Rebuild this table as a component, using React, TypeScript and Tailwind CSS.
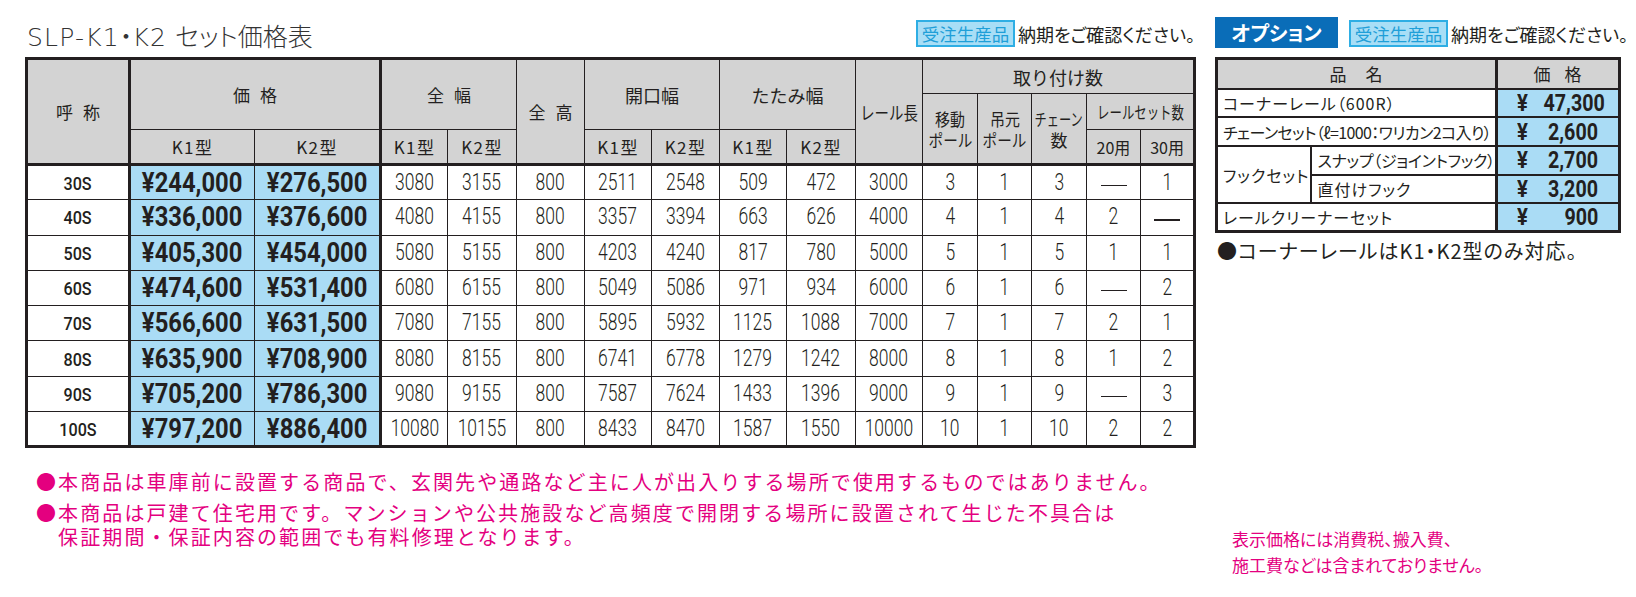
import type { ReactNode } from 'react'

type Row = string[]

const rows: Row[] = [
  ['30S', '¥244,000', '¥276,500', '3080', '3155', '800', '2511', '2548', '509', '472', '3000', '3', '1', '3', '—', '1'],
  ['40S', '¥336,000', '¥376,600', '4080', '4155', '800', '3357', '3394', '663', '626', '4000', '4', '1', '4', '2', '—'],
  ['50S', '¥405,300', '¥454,000', '5080', '5155', '800', '4203', '4240', '817', '780', '5000', '5', '1', '5', '1', '1'],
  ['60S', '¥474,600', '¥531,400', '6080', '6155', '800', '5049', '5086', '971', '934', '6000', '6', '1', '6', '—', '2'],
  ['70S', '¥566,600', '¥631,500', '7080', '7155', '800', '5895', '5932', '1125', '1088', '7000', '7', '1', '7', '2', '1'],
  ['80S', '¥635,900', '¥708,900', '8080', '8155', '800', '6741', '6778', '1279', '1242', '8000', '8', '1', '8', '1', '2'],
  ['90S', '¥705,200', '¥786,300', '9080', '9155', '800', '7587', '7624', '1433', '1396', '9000', '9', '1', '9', '—', '3'],
  ['100S', '¥797,200', '¥886,400', '10080', '10155', '800', '8433', '8470', '1587', '1550', '10000', '10', '1', '10', '2', '2'],
]

const colW = [
  'w-[103px]', 'w-[125px]', 'w-[126px]', 'w-[67px]', 'w-[69px]', 'w-[68px]', 'w-[67px]', 'w-[68px]',
  'w-[67px]', 'w-[69px]', 'w-[67px]', 'w-[55px]', 'w-[54px]', 'w-[55px]', 'w-[54px]', 'w-[54px]',
]

const th = 'border border-[#231f20] bg-[#d3d3d3] p-0 text-center align-middle font-normal text-[#231f20]'
const td = 'border border-[#231f20] p-0 text-center align-middle text-[#231f20]'
const num = "font-['Roboto',sans-serif]"

// 2文字の見出し（字間あき）
function Spaced({ a, b, gap = 'gap-[10px]' }: { a: string; b: string; gap?: string }) {
  return (
    <span className={`inline-flex ${gap}`}>
      <span>{a}</span>
      <span>{b}</span>
    </span>
  )
}

function Badge() {
  return (
    <span className="inline-flex h-[27px] w-[99px] shrink-0 items-center justify-center border-2 border-[#2eaee4] bg-[#a8def6] text-[17.5px] leading-none text-[#1f9fd8]">
      受注生産品
    </span>
  )
}

function Cell({ v, i, first }: { v: string; i: number; first: boolean }) {
  const top = first ? 'border-t-[3px]' : ''
  if (i === 0) {
    return (
      <td className={`${td} ${top} border-r-[3px]`}>
        <span className={`${num} inline-block text-[19px] font-medium leading-none scale-x-[0.85]`}>{v}</span>
      </td>
    )
  }
  if (i === 1 || i === 2) {
    return (
      <td className={`${td} ${top} bg-[#aadcf5] ${i === 2 ? 'border-r-[3px]' : ''}`}>
        <span className={`${num} inline-block text-[28px] font-bold leading-none scale-x-[0.85]`}>{v}</span>
      </td>
    )
  }
  if (v === '—') {
    return (
      <td className={`${td} ${top}`}>
        <span className="inline-block h-[1.5px] w-[26px] bg-[#231f20] align-middle" aria-label="—" />
      </td>
    )
  }
  return (
    <td className={`${td} ${top}`}>
      <span className={`${num} inline-block text-[23px] font-light leading-none scale-x-[0.76]`}>{v}</span>
    </td>
  )
}

// セル幅より広い見出しを中央で縮める
function Narrow({ children, s = '' }: { children: ReactNode; s?: string }) {
  return (
    <span className="flex justify-center">
      <span className={`inline-block shrink-0 whitespace-nowrap ${s}`}>{children}</span>
    </span>
  )
}

function MainTable() {
  return (
    <table className="w-[1170px] table-fixed border-collapse border-[3px] border-[#231f20]">
      <colgroup>
        {colW.map((c, i) => (
          <col key={i} className={c} />
        ))}
      </colgroup>
      <thead className="text-[17px] leading-none">
        <tr className="h-[35px]">
          <th rowSpan={3} className={`${th} border-r-[3px]`}>
            <Spaced a="呼" b="称" />
          </th>
          <th rowSpan={2} colSpan={2} className={`${th} border-r-[3px]`}>
            <Spaced a="価" b="格" />
          </th>
          <th rowSpan={2} colSpan={2} className={th}>
            <Spaced a="全" b="幅" />
          </th>
          <th rowSpan={3} className={th}>
            <Spaced a="全" b="高" />
          </th>
          <th rowSpan={2} colSpan={2} className={`${th} text-[18px]`}>開口幅</th>
          <th rowSpan={2} colSpan={2} className={`${th} text-[18px]`}>たたみ幅</th>
          <th rowSpan={3} className={th}>
            <Narrow s="scale-x-[0.8] text-[18px]">レール長</Narrow>
          </th>
          <th colSpan={5} className={`${th} text-[18px]`}>取り付け数</th>
        </tr>
        <tr className="h-[36px]">
          <th rowSpan={2} className={`${th} leading-[21px]`}>
            <Narrow s="scale-x-[0.88]">移動</Narrow>
            <Narrow s="scale-x-[0.86]">ポール</Narrow>
          </th>
          <th rowSpan={2} className={`${th} leading-[21px]`}>
            <Narrow s="scale-x-[0.88]">吊元</Narrow>
            <Narrow s="scale-x-[0.86]">ポール</Narrow>
          </th>
          <th rowSpan={2} className={`${th} leading-[21px]`}>
            <Narrow s="scale-x-[0.72]">チェーン</Narrow>
            <Narrow>数</Narrow>
          </th>
          <th colSpan={2} className={th}>
            <Narrow s="scale-x-[0.73]">レールセット数</Narrow>
          </th>
        </tr>
        <tr className="h-[35px]">
          <th className={`${th} tracking-[0.08em]`}>K1型</th>
          <th className={`${th} border-r-[3px] tracking-[0.08em]`}>K2型</th>
          <th className={`${th} tracking-[0.08em]`}>K1型</th>
          <th className={`${th} tracking-[0.08em]`}>K2型</th>
          <th className={`${th} tracking-[0.08em]`}>K1型</th>
          <th className={`${th} tracking-[0.08em]`}>K2型</th>
          <th className={`${th} tracking-[0.08em]`}>K1型</th>
          <th className={`${th} tracking-[0.08em]`}>K2型</th>
          <th className={`${th} text-[16px]`}>20用</th>
          <th className={`${th} text-[16px]`}>30用</th>
        </tr>
      </thead>
      <tbody>
        {rows.map((r, ri) => (
          <tr key={r[0]} className="h-[35.3px]">
            {r.map((v, i) => (
              <Cell key={i} v={v} i={i} first={ri === 0} />
            ))}
          </tr>
        ))}
      </tbody>
    </table>
  )
}

const otd = 'border-2 border-[#231f20] p-0 align-middle whitespace-nowrap text-[16px] leading-none text-[#231f20]'

function Price({ v }: { v: string }) {
  return (
    <td className={`${otd} border-l-[3px] bg-[#aadcf5]`}>
      <div className={`${num} flex items-center justify-between pl-[19px] pr-[20px] text-[24px] font-bold leading-none tracking-normal`}>
        <span className="inline-block origin-left scale-x-[0.85]">¥</span>
        <span className="inline-block origin-right scale-x-[0.82]">{v}</span>
      </div>
    </td>
  )
}

function OptionTable() {
  return (
    <table className="w-[403px] table-fixed border-collapse border-[3px] border-[#231f20] tracking-[1px] [font-feature-settings:'palt']">
      <colgroup>
        <col className="w-[94px]" />
        <col className="w-[186px]" />
        <col className="w-[123px]" />
      </colgroup>
      <thead>
        <tr className="h-[30px]">
          <th colSpan={2} className={`${otd} bg-[#d3d3d3] text-center text-[17px] font-normal`}>
            <Spaced a="品" b="名" gap="gap-[18px]" />
          </th>
          <th className={`${otd} border-l-[3px] bg-[#d3d3d3] text-center text-[17px] font-normal`}>
            <Spaced a="価" b="格" gap="gap-[13px]" />
          </th>
        </tr>
      </thead>
      <tbody>
        <tr className="h-[28.7px]">
          <td colSpan={2} className={`${otd} pl-[5px]`}>コーナーレール（600R）</td>
          <Price v="47,300" />
        </tr>
        <tr className="h-[28.7px]">
          <td colSpan={2} className={`${otd} pl-[5px] tracking-[-0.6px]`}>チェーンセット（ℓ=1000：ワリカン2コ入り）</td>
          <Price v="2,600" />
        </tr>
        <tr className="h-[28.7px]">
          <td rowSpan={2} className={`${otd} pl-[5px]`}>フックセット</td>
          <td className={`${otd} pl-[6px] tracking-[-0.3px]`}>スナップ（ジョイントフック）</td>
          <Price v="2,700" />
        </tr>
        <tr className="h-[28.7px]">
          <td className={`${otd} pl-[6px]`}>直付けフック</td>
          <Price v="3,200" />
        </tr>
        <tr className="h-[28.7px]">
          <td colSpan={2} className={`${otd} pl-[5px]`}>レールクリーナーセット</td>
          <Price v="900" />
        </tr>
      </tbody>
    </table>
  )
}

export default function App() {
  return (
    <div className="h-[597px] w-[1636px] overflow-hidden bg-white font-['Noto_Sans_CJK_JP',sans-serif] text-[#231f20]">
      <div className="flex gap-[20px] pl-[25px] pt-[14px]">
        <div className="w-[1170px]">
          <div className="flex h-[43px] items-end justify-between">
            <h1 className="mb-[7px] ml-[2px] whitespace-nowrap text-[25px] font-light leading-none text-[#333] [font-feature-settings:'palt']">
              <span className="font-['DejaVu_Sans',sans-serif] tracking-[1.2px]">SLP-K1</span>
              <span>・</span>
              <span className="font-['DejaVu_Sans',sans-serif] tracking-[1.2px]">K2</span>
              <span className="ml-[8px]">セット価格表</span>
            </h1>
            <div className="mb-[10px] flex items-center gap-[3px]">
              <Badge />
              <span className="whitespace-nowrap text-[18px] leading-none [font-feature-settings:'palt']">納期をご確認ください。</span>
            </div>
          </div>
          <MainTable />
        </div>
        <div className="w-[405px]">
          <div className="flex h-[43px] items-end whitespace-nowrap">
            <span className="mb-[9px] inline-flex h-[31px] w-[123px] shrink-0 items-center justify-center bg-[#0a6db8] text-[20px] font-bold leading-none text-white [font-feature-settings:'palt']">
              オプション
            </span>
            <div className="mb-[10px] ml-[11px] flex items-center gap-[3px]">
              <Badge />
              <span className="text-[18px] leading-none [font-feature-settings:'palt']">納期をご確認ください。</span>
            </div>
          </div>
          <OptionTable />
          <p className="mt-[8px] ml-[2px] whitespace-nowrap text-[20px] leading-none tracking-[1px] [font-feature-settings:'palt']">●コーナーレールはK1・K2型のみ対応。</p>
        </div>
      </div>
      <div className="mt-[22px] flex">
        <div className="ml-[36px] flex w-[1190px] flex-col gap-[7px] whitespace-nowrap text-[20px] leading-[24px] tracking-[2.1px] text-[#e4007f]">
          <div className="flex">
            <span>●</span>
            <span>本商品は車庫前に設置する商品で、玄関先や通路など主に人が出入りする場所で使用するものではありません。</span>
          </div>
          <div className="flex">
            <span>●</span>
            <span>
              本商品は戸建て住宅用です。マンションや公共施設など高頻度で開閉する場所に設置されて生じた不具合は
              <br />
              保証期間・保証内容の範囲でも有料修理となります。
            </span>
          </div>
        </div>
        <div className="ml-[6px] mt-[56px] whitespace-nowrap text-[17px] leading-[26px] text-[#e4007f] [font-feature-settings:'palt']">
          表示価格には消費税、搬入費、
          <br />
          施工費などは含まれておりません。
        </div>
      </div>
    </div>
  )
}
